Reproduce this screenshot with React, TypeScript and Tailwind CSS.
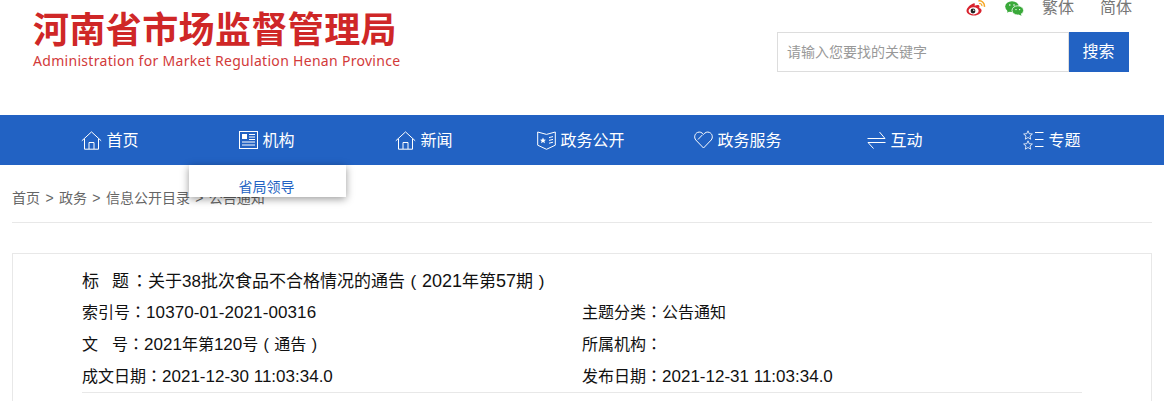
import type { ReactNode } from 'react'

const FONT = "font-['Liberation_Sans','Noto_Sans_CJK_SC',sans-serif]"

function HomeIcon() {
  return (
    <svg width="21" height="19" viewBox="0 0 21 19" fill="none" stroke="white" strokeWidth="1">
      <path d="M0.8 9.8 L10.5 0.9 L20.2 9.8" />
      <path d="M3.5 8 V18.2 H17.5 V8" />
      <path d="M8 18 V11.5 H13 V18" />
    </svg>
  )
}

function OrgIcon() {
  return (
    <svg width="19" height="18" viewBox="0 0 19 18" fill="none" stroke="white" strokeWidth="1">
      <rect x="0.5" y="0.5" width="18" height="17" />
      <rect x="3" y="3" width="5" height="5" fill="white" stroke="none" />
      <path d="M10 3.5 H16 M10 6 H16 M10 8.5 H16 M3 11 H16 M3 14 H16" />
    </svg>
  )
}

function OpenIcon() {
  return (
    <svg width="19" height="19" viewBox="0 0 19 19" fill="none" stroke="white" strokeWidth="1">
      <path d="M0.7 1 L9.5 3.4 L18.3 1 V14.2 L9.5 18.3 L0.7 14.2 Z" />
      <path d="M12 6.6 L16 5.6 M12 9.4 L16 8.4 M12 12.2 L16 11.2" />
      <path d="M6 6.5 L6.9 8.4 L9 8.7 L7.4 10.1 L7.9 12.2 L6 11.1 L4.1 12.2 L4.6 10.1 L3 8.7 L5.1 8.4 Z" fill="white" stroke="none" />
    </svg>
  )
}

function HeartIcon() {
  return (
    <svg width="19" height="18" viewBox="0 0 19 18" fill="none" stroke="white" strokeWidth="1">
      <path d="M9.5 17 L1.8 9 C-0.2 6.6 0.6 2.6 3.6 1.4 C5.8 0.5 7.8 1.4 9.5 3.4 C11.2 1.4 13.2 0.5 15.4 1.4 C18.4 2.6 19.2 6.6 17.2 9 L9.5 17 Z" />
      <path d="M4 8.5 L8.5 3.8" />
    </svg>
  )
}

function SwapIcon() {
  return (
    <svg width="19" height="18" viewBox="0 0 19 18" fill="none" stroke="white" strokeWidth="1">
      <path d="M0.5 7.5 H18 L12.5 1" />
      <path d="M18.5 11.5 H1 L6.5 17.5" />
    </svg>
  )
}

function TopicIcon() {
  const star = 'M5 0.8 L6.2 3.7 L9.4 4 L7 6 L7.7 9.2 L5 7.5 L2.3 9.2 L3 6 L0.6 4 L3.8 3.7 Z'
  return (
    <svg width="21" height="20" viewBox="0 0 21 20" fill="none" stroke="white" strokeWidth="1">
      <path d={star} strokeOpacity="0.8" />
      <path d={star} transform="translate(0 10)" strokeOpacity="0.8" />
      <path d="M12 2.5 H20.5 M12 9.5 H20.5 M12 16.5 H20.5" />
    </svg>
  )
}

function WeiboIcon() {
  return (
    <svg width="20" height="16" viewBox="0 0 20 16">
      <path d="M8 3.2 C4.5 4.2 0.5 7.8 0.5 10.8 C0.5 13.8 4.2 15.6 8 15.6 C12.6 15.6 15.6 12.8 15.6 10.6 C15.6 9 14.2 8.4 13.2 8 C13.6 6.8 13.6 5.8 12.8 5.3 C11.8 4.7 10 5.2 8.6 5.8 C9 4 9 2.9 8 3.2 Z" fill="#d9232e" />
      <ellipse cx="7.6" cy="10.8" rx="5" ry="3.6" fill="white" />
      <circle cx="7" cy="11" r="2.4" fill="#222" />
      <circle cx="7.8" cy="10.3" r="0.7" fill="white" />
      <path d="M12.4 1 C15.8 0.2 18.9 3 18.4 6.8" fill="none" stroke="#f5a623" strokeWidth="1.5" />
      <path d="M13.2 3.6 C14.8 3.2 16.2 4.5 15.9 6.2" fill="none" stroke="#f5a623" strokeWidth="1.2" />
    </svg>
  )
}

function WechatIcon() {
  return (
    <svg width="19" height="15" viewBox="0 0 19 15">
      <ellipse cx="7" cy="5.6" rx="6.8" ry="5.4" fill="#3aa93a" />
      <path d="M2.6 8.5 L2.2 11.8 L5.6 9.8 Z" fill="#3aa93a" />
      <ellipse cx="12.8" cy="9.4" rx="5.8" ry="4.6" fill="#3aa93a" stroke="white" strokeWidth="0.8" />
      <path d="M15.6 12.4 L16.6 14.8 L13.4 13.4 Z" fill="#3aa93a" />
      <circle cx="4.8" cy="4" r="0.8" fill="white" />
      <circle cx="9" cy="4" r="0.8" fill="white" />
      <circle cx="11" cy="8.6" r="0.7" fill="white" />
      <circle cx="14.6" cy="8.6" r="0.7" fill="white" />
    </svg>
  )
}

const navItems: { label: string; icon: ReactNode }[] = [
  { label: '首页', icon: <HomeIcon /> },
  { label: '机构', icon: <OrgIcon /> },
  { label: '新闻', icon: <HomeIcon /> },
  { label: '政务公开', icon: <OpenIcon /> },
  { label: '政务服务', icon: <HeartIcon /> },
  { label: '互动', icon: <SwapIcon /> },
  { label: '专题', icon: <TopicIcon /> },
]

// latin runs sit a little larger than the chinese around them
function L({ children }: { children: ReactNode }) {
  return <span className="text-[17px]">{children}</span>
}

// TC font centres the full width colon, like the reference
function Colon() {
  return <span className="font-['Noto_Sans_CJK_TC']">：</span>
}

// full width bracket with the glyph in the middle of its cell
function B({ children }: { children: ReactNode }) {
  return <span className="inline-block w-[1em] text-center">{children}</span>
}

function MetaRow({ left, right }: { left: ReactNode; right: ReactNode }) {
  return (
    <div className="flex h-[32px] items-center">
      <span className="w-[500px]">{left}</span>
      <span>{right}</span>
    </div>
  )
}

export default function App() {
  return (
    <div className={`h-[401px] w-[1164px] overflow-hidden bg-white ${FONT}`}>
      <header className="flex h-[115px] items-start justify-between pl-[33px] pr-[35px]">
        <div className="pt-[11px]">
          <h1 className="text-[36px] leading-[40px] font-bold tracking-[0.4px] text-[#cf2727]">河南省市场监督管理局</h1>
          <p className="font-['Noto_Sans'] text-[14px] leading-[20px] tracking-[0.3px] text-[#d23a3a]">
            Administration for Market Regulation Henan Province
          </p>
        </div>
        <div className="flex flex-col items-end">
          <div className="flex h-[16px] items-center text-[16px] leading-[16px] text-[#777]">
            <WeiboIcon />
            <span className="ml-[19px]"><WechatIcon /></span>
            <span className="ml-[18px]">繁体</span>
            <span className="ml-[26px] mr-[-3px]">简体</span>
          </div>
          <div className="mt-[16px] flex h-[40px]">
            <div className="flex w-[292px] items-center border border-[#dddddd] pl-[9px] text-[14px] text-[#999]">
              请输入您要找的关键字
            </div>
            <button className="w-[60px] bg-[#2262c3] pr-[1px] text-[16px] text-white">搜索</button>
          </div>
        </div>
      </header>

      <nav className="relative flex h-[50px] justify-center bg-[#2262c3] pr-[2px]">
        {navItems.map((item) => (
          <a key={item.label} className="flex w-[157px] items-center justify-center gap-[4px] text-[16px] text-white">
            {item.icon}
            <span className="mt-[2px]">{item.label}</span>
          </a>
        ))}
        <div className="absolute top-[50px] left-[189px] z-10 flex h-[32px] w-[157px] items-end justify-center bg-white text-[14px] text-[#2262c3] shadow-[0_2px_8px_rgba(0,0,0,0.4)]">
          <span className="mr-[2px] mb-[-1px]">省局领导</span>
        </div>
      </nav>

      <div className="mx-[12px] flex h-[58px] items-center border-b border-[#e8e8e8] pt-[9px] text-[14px] text-[#666] [word-spacing:1.5px]">
        首页 &gt; 政务 &gt; 信息公开目录 &gt; 公告通知
      </div>

      <main className="mx-[12px] mt-[30px] h-[160px] border border-[#e8e8e8] px-[69px] pt-[11px] text-[16px] text-[#111]">
        <div className="flex h-[31px] items-center text-[17px]">
          <span>
            标<span className="inline-block w-[13px]" />题<span className="inline-block w-[2px]" /><Colon />关于38批次食品不合格情况的通告<B>(</B>
            <span className="text-[18px]">2021</span>年第<span className="text-[18px]">57</span>期<B>)</B>
          </span>
        </div>
        <MetaRow
          left={<>索引号<Colon /><span className="tracking-[0.1px]"><L>10370-01-2021-00316</L></span></>}
          right={<>主题分类<Colon />公告通知</>}
        />
        <MetaRow
          left={<>文<span className="inline-block w-[14px]" />号<Colon /><L>2021</L>年第<L>120</L>号<B>(</B>通告<B>)</B></>}
          right={<>所属机构<Colon /></>}
        />
        <MetaRow
          left={<>成文日期<Colon /><L>2021-12-30 11:03:34.0</L></>}
          right={<>发布日期<Colon /><L>2021-12-31 11:03:34.0</L></>}
        />
        <div className="border-t border-[#e8e8e8]" />
      </main>
    </div>
  )
}
